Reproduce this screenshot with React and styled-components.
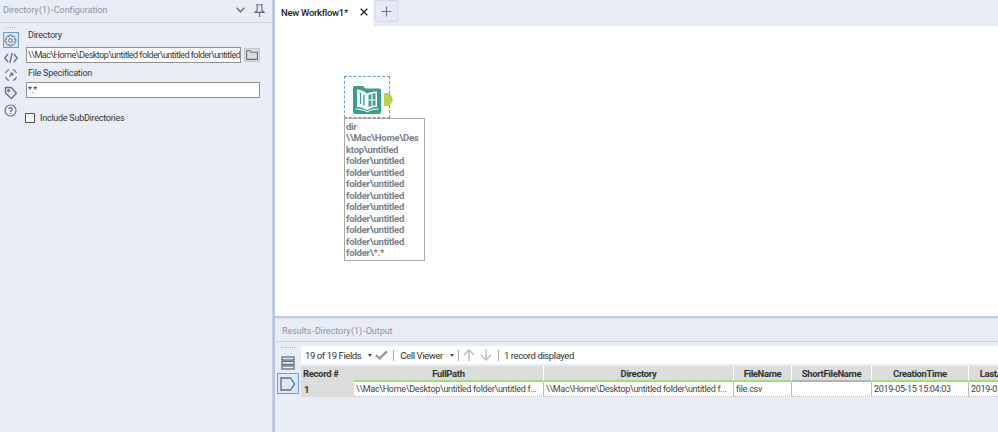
import React from "react";
import styled, { createGlobalStyle } from "styled-components";

const Global = createGlobalStyle`
  html, body { margin: 0; padding: 0; width: 998px; height: 432px; overflow: hidden; background: #e9edf8; }
  body { font-family: Roboto, "Noto Sans", sans-serif; font-size: 9px; color: #333; }
  * { box-sizing: border-box; }
`;

const Page = styled.div`
  display: flex;
  width: 998px;
  height: 432px;
  overflow: hidden;
`;

const ConfigPanel = styled.aside`
  width: 272px;
  flex: none;
  display: flex;
  flex-direction: column;
  background: #e9edf8;
`;

const PanelTitle = styled.div`
  display: flex;
  align-items: center;
  height: 23px;
  flex: none;
  padding: 0 7px 2px 3px;
  border-bottom: 1px solid #cfd1d8;
  color: #8d8f96;
  font-size: 9px;
  letter-spacing: -0.05px;
  word-spacing: -1.6px;
`;

const TitleText = styled.span`
  flex: 1;
`;

const TitleIcons = styled.div`
  display: flex;
  align-items: center;
  gap: 9px;
  color: #5f6a78;
`;

const ConfigBody = styled.div`
  flex: 1;
  min-height: 0;
  display: flex;
`;

const IconRail = styled.nav`
  width: 19px;
  margin-left: 1px;
  flex: none;
  display: flex;
  flex-direction: column;
  align-items: center;
`;

const GripDots = styled.div`
  height: 5px;
  width: ${p => p.$w}px;
  border-top: 1px dotted #a8abb2;
  margin-top: ${p => p.$mt}px;
  flex: none;
`;

const RailButton = styled.div`
  width: 16px;
  height: 16px;
  margin-bottom: 1.6px;
  display: flex;
  align-items: center;
  justify-content: center;
  color: #5f7080;
  border: 1px solid ${p => (p.$active ? "#6d9bd8" : "transparent")};
  background: ${p => (p.$active ? "#dbe6f7" : "transparent")};
`;

const Form = styled.div`
  flex: 1;
  min-width: 0;
  padding: 5px 12px 0 6px;
  display: flex;
  flex-direction: column;
`;

const FieldLabel = styled.label`
  display: block;
  margin-left: 2px;
  height: 14px;
  line-height: 14px;
  font-size: 9px;
  letter-spacing: -0.25px;
  color: #333;
`;

const PathRow = styled.div`
  display: flex;
  align-items: center;
  gap: 3px;
  margin: 5px 0 3px;
`;

const TextInput = styled.div`
  flex: ${p => (p.$fill ? "1" : "none")};
  min-width: 0;
  height: 16px;
  line-height: 14px;
  margin-top: ${p => p.$mt || 0}px;
  padding: 0 1px 0 1px;
  background: #fff;
  border: 1px solid #8f8f8f;
  font-size: 9px;
  letter-spacing: -0.5px;
  color: #333;
  white-space: nowrap;
  overflow: hidden;
`;

const BrowseButton = styled.div`
  width: 16px;
  height: 14px;
  flex: none;
  background: #dcdcdc;
  border: 1px solid #c4c4c4;
  display: flex;
  align-items: center;
  justify-content: center;
  color: #5f6a78;
`;

const CheckRow = styled.div`
  display: flex;
  align-items: center;
  gap: 5px;
  margin: 14px 0 0 -1px;
  font-size: 9px;
  letter-spacing: -0.25px;
  height: 12px;
`;

const Checkbox = styled.span`
  width: 10px;
  height: 10px;
  background: #fff;
  border: 1px solid #555;
  flex: none;
`;

const Splitter = styled.div`
  width: 3px;
  flex: none;
  background: #b7c4e0;
  border-left: 1px solid #c5cee4;
`;

const Main = styled.main`
  flex: 1;
  min-width: 0;
  display: flex;
  flex-direction: column;
`;

const TabBar = styled.div`
  display: flex;
  height: 26px;
  flex: none;
  background: #e9edf8;
  border-bottom: 1px solid #e0e4f0;
`;

const Tab = styled.div`
  width: 98px;
  height: 26px;
  background: #fff;
  display: flex;
  align-items: center;
  padding: 0 0 2px 6px;
  font-size: 9.5px;
  letter-spacing: -0.3px;
  font-weight: 500;
  color: #222;
`;

const TabName = styled.span`
  flex: 1;
`;

const TabClose = styled.span`
  display: flex;
  margin-right: 5px;
  color: #222;
`;

const AddTab = styled.div`
  width: 23px;
  height: 22px;
  margin-left: 2px;
  border: 1px solid #d3d9ea;
  border-radius: 2px;
  background: #e6eaf6;
  display: flex;
  align-items: center;
  justify-content: center;
  color: #68748a;
`;

const Canvas = styled.section`
  position: relative;
  flex: 1;
  background: #fff;
`;

const ToolSelection = styled.div`
  position: absolute;
  left: 69px;
  top: 50px;
  width: 46px;
  height: 42px;
  border: 1px dashed #6d9bd8;
`;

const ToolIcon = styled.svg`
  position: absolute;
  left: 78px;
  top: 60px;
`;

const ToolAnchor = styled.svg`
  position: absolute;
  left: 108.5px;
  top: 67px;
`;

const Annotation = styled.div`
  position: absolute;
  left: 69px;
  top: 92px;
  width: 81px;
  height: 143px;
  padding: 2px 0 0 1px;
  background: #fff;
  border: 1px solid #a9a9a9;
  color: #7b7f8a;
  font-size: 9.5px;
  letter-spacing: -0.25px;
  font-weight: 700;
  line-height: 11.45px;
  white-space: pre;
`;

const ResultsPanel = styled.section`
  height: 116px;
  flex: none;
  display: flex;
  flex-direction: column;
  background: #e9edf8;
  border-top: 2px solid #bcc7e0;
`;

const ResultsTitle = styled.div`
  height: 24px;
  flex: none;
  margin-left: 1px;
  padding: 1px 0 0 6px;
  display: flex;
  align-items: center;
  border-top: 1px solid #dcdfe8;
  border-bottom: 1px solid #cfd1d8;
  color: #8d8f96;
  font-size: 9px;
  letter-spacing: -0.05px;
  word-spacing: -1.6px;
`;

const ResultsBody = styled.div`
  flex: 1;
  min-height: 0;
  display: flex;
`;

const ResultsRail = styled.nav`
  width: 26px;
  flex: none;
  display: flex;
  flex-direction: column;
  align-items: center;
`;

const RailTall = styled.div`
  height: ${p => p.$h}px;
  width: 22px;
  flex: none;
  display: flex;
  align-items: center;
  justify-content: center;
  border: 1px solid ${p => (p.$active ? "#6d9bd8" : "transparent")};
  background: ${p => (p.$active ? "#dbe6f7" : "transparent")};
  color: #5f7080;
`;

const ResultsContent = styled.div`
  flex: 1;
  min-width: 0;
  overflow: hidden;
  padding-top: 4px;
`;

const ResultsToolbar = styled.div`
  height: 18px;
  display: flex;
  align-items: center;
  background: #fff;
  padding-left: 4px;
  font-size: 9.5px;
  letter-spacing: -0.4px;
  color: #333;
  white-space: nowrap;
`;

const ToolbarText = styled.span`
  margin-right: ${p => p.$mr || 0}px;
`;

const Caret = styled.span`
  width: 0;
  height: 0;
  border-left: 2.5px solid transparent;
  border-right: 2.5px solid transparent;
  border-top: 3px solid #444;
  margin-right: ${p => p.$mr || 0}px;
`;

const ToolbarSep = styled.span`
  width: 1px;
  height: 11px;
  background: #a8a8a8;
  margin: 0 ${p => p.$r}px 0 ${p => p.$l}px;
`;

const ToolbarIcon = styled.span`
  display: flex;
  color: ${p => p.$c || "#b9b9b9"};
  margin-right: ${p => p.$mr || 0}px;
`;

const Grid = styled.div`
  display: grid;
  grid-template-columns: 53px 190px 190px 58px 80px 97px 89px;
  width: 757px;
  margin-top: 2px;
  color: #333;
  white-space: nowrap;
`;

const RecordHead = styled.div`
  height: 16px;
  background: #dcdcdc;
  font-size: 9.5px;
  letter-spacing: -0.35px;
  font-weight: 700;
  padding-left: 2px;
  line-height: 15px;
`;

const ColHead = styled.div`
  height: 16px;
  background: #dcdcdc;
  border-right: 1px solid #fff;
  border-bottom: 2px solid ${p => p.$bar || "#9fe073"};
  font-size: 9.5px;
  letter-spacing: -0.35px;
  text-align: center;
  font-weight: 700;
  line-height: 15px;
  overflow: hidden;
`;

const RecordCell = styled.div`
  height: 15px;
  background: #dcdcdc;
  font-size: 9.5px;
  font-weight: 700;
  padding-left: 3px;
  line-height: 15px;
`;

const Cell = styled.div`
  height: 15px;
  background: #fff;
  border-right: 1px solid #bdbdbd;
  border-bottom: 1px dotted #bdbdbd;
  padding-left: 2px;
  font-size: 9px;
  letter-spacing: -0.3px;
  line-height: 15px;
  color: #444;
  overflow: hidden;
`;

const Gear = () => (
  <svg width="13" height="13" viewBox="0 0 24 24" fill="none" stroke="currentColor" strokeWidth="1.8">
    <circle cx="12" cy="12" r="3.5" />
    <path d="M10 2h4l.8 3 2.7-1.2 2.8 2.8L19 9.3l3 .7v4l-3 .7 1.3 2.7-2.8 2.8-2.7-1.3-.8 3h-4l-.8-3-2.7 1.3-2.8-2.8L5 14.700 2 14v-4l3-.7-1.3-2.7 2.8-2.8L9.200 5z" />
  </svg>
);

const Code = () => (
  <svg width="14" height="12" viewBox="0 0 14 12" fill="none" stroke="currentColor" strokeWidth="1.3">
    <path d="M4 2L.8 6 4 10M10 2l3.2 4L10 10M8.2 1L5.8 11" />
  </svg>
);

const Meta = () => (
  <svg width="14" height="14" viewBox="0 0 14 14" fill="none" stroke="currentColor" strokeWidth="1.2">
    <path d="M1.5 5A6 6 0 0 1 5 1.5M9 1.5A6 6 0 0 1 12.5 5M12.5 9A6 6 0 0 1 9 12.5M5 12.5A6 6 0 0 1 1.5 9" />
    <path d="M5.5 8.5L8.5 5.5M6 5.3h2.700V8" />
  </svg>
);

const Tag = () => (
  <svg width="14" height="14" viewBox="0 0 14 14" fill="none" stroke="currentColor" strokeWidth="1.3">
    <path d="M1.5 1.5H7l5.5 5.800-5.200 5.200L1.5 7z" />
    <circle cx="4.6" cy="4.6" r=".9" />
  </svg>
);

const Help = () => (
  <svg width="13" height="13" viewBox="0 0 13 13" fill="none" stroke="currentColor" strokeWidth="1.2">
    <circle cx="6.5" cy="6.5" r="5.5" />
    <path d="M4.800 5.200c0-2.200 3.500-2.200 3.500 0 0 1.400-1.800 1.300-1.800 2.700M6.500 9v1" />
  </svg>
);

const Folder = () => (
  <svg width="12" height="10" viewBox="0 0 12 10" fill="none" stroke="currentColor" strokeWidth="1.1">
    <path d="M.6 9.400V.8h3.600l1 1.400h6.200v7.200z" />
  </svg>
);

const Chevron = () => (
  <svg width="9" height="6" viewBox="0 0 9 6" fill="none" stroke="currentColor" strokeWidth="1.3">
    <path d="M.7.8l3.800 3.900L8.300.8" />
  </svg>
);

const Pin = () => (
  <svg width="11" height="13" viewBox="0 0 11 13" fill="none" stroke="currentColor" strokeWidth="1.1">
    <path d="M2 .8h7M3.200.8v5.400L1 8.400h9L7.800 6.200V.8M5.500 8.400V13" />
  </svg>
);

const Close = () => (
  <svg width="8" height="8" viewBox="0 0 8 8" fill="none" stroke="currentColor" strokeWidth="1.3">
    <path d="M.7.7l6.600 6.600M7.300.7L.7 7.300" />
  </svg>
);

const Plus = () => (
  <svg width="11" height="11" viewBox="0 0 11 11" fill="none" stroke="currentColor" strokeWidth="1.1">
    <path d="M5.500.5v10M.5 5.500h10" />
  </svg>
);

const ListStack = () => (
  <svg width="14" height="14" viewBox="0 0 14 14" fill="none" stroke="currentColor" strokeWidth="1.3">
    <rect x="1" y="1" width="12" height="3" />
    <rect x="1" y="5.5" width="12" height="3" />
    <rect x="1" y="10" width="12" height="3" />
  </svg>
);

const OutputTag = () => (
  <svg width="16" height="14" viewBox="0 0 16 14" fill="none" stroke="#5f7080" strokeWidth="1.3">
    <path d="M1 1h9.500l4 6-4 6H1z" />
  </svg>
);

const Check = () => (
  <svg width="13" height="10" viewBox="0 0 13 10" fill="none" stroke="currentColor" strokeWidth="2.4">
    <path d="M1 5.200l3.800 3.200L12 1.400" />
  </svg>
);

const ArrowUp = () => (
  <svg width="12" height="12" viewBox="0 0 12 12" fill="none" stroke="currentColor" strokeWidth="1.3">
    <path d="M6 12V1M1 6l5-5 5 5" />
  </svg>
);

const ArrowDown = () => (
  <svg width="12" height="12" viewBox="0 0 12 12" fill="none" stroke="currentColor" strokeWidth="1.3">
    <path d="M6 0v11M1 6l5 5 5-5" />
  </svg>
);

const annotation = `dir
\\\\Mac\\Home\\Des
ktop\\untitled
folder\\untitled
folder\\untitled
folder\\untitled
folder\\untitled
folder\\untitled
folder\\untitled
folder\\untitled
folder\\untitled
folder\\*.*`;

const longPath = "\\\\Mac\\Home\\Desktop\\untitled folder\\untitled f...";

export default function App() {
  return (
    <Page>
      <Global />
      <ConfigPanel>
        <PanelTitle>
          <TitleText>Directory (1) - Configuration</TitleText>
          <TitleIcons><Chevron /><Pin /></TitleIcons>
        </PanelTitle>
        <ConfigBody>
          <IconRail>
            <GripDots $w={9} $mt={4} />
            <RailButton $active><Gear /></RailButton>
            <RailButton><Code /></RailButton>
            <RailButton><Meta /></RailButton>
            <RailButton><Tag /></RailButton>
            <RailButton><Help /></RailButton>
          </IconRail>
          <Form>
            <FieldLabel>Directory</FieldLabel>
            <PathRow>
              <TextInput $fill>\\Mac\Home\Desktop\untitled folder\untitled folder\untitled</TextInput>
              <BrowseButton><Folder /></BrowseButton>
            </PathRow>
            <FieldLabel>File Specification</FieldLabel>
            <TextInput $mt={2}>*.*</TextInput>
            <CheckRow><Checkbox />Include SubDirectories</CheckRow>
          </Form>
        </ConfigBody>
      </ConfigPanel>
      <Splitter />
      <Main>
        <TabBar>
          <Tab>
            <TabName>New Workflow1*</TabName>
            <TabClose><Close /></TabClose>
          </Tab>
          <AddTab><Plus /></AddTab>
        </TabBar>
        <Canvas>
          <ToolSelection />
          <ToolIcon width="28" height="28" viewBox="0 0 28 28">
            <path d="M2 0h8l2.500 2.500H26a2 2 0 0 1 2 2V26a2 2 0 0 1-2 2H2a2 2 0 0 1-2-2V2a2 2 0 0 1 2-2z" fill="#35a08d" />
            <path d="M14 7.500C11 5 7.500 3.500 4 3.500V21c3.500 0 7 1 10 3 3-2 6.500-3 10-3V5.500c-3.500 0-7 .5-10 2z" fill="#fff" />
            <path d="M7.500 7v11M11 8.500v11" stroke="#35a08d" strokeWidth="1.3" fill="none" />
            <path d="M15.500 9c2-.8 4.500-1.600 7-1.800v12.100c-2.500.2-5 1-7 1.800z" fill="#35a08d" />
            <path d="M19 8v12.500M15.500 14h7" stroke="#fff" strokeWidth="1.2" fill="none" />
            <path d="M2.500 23c4.500 0 8.500 1 11.500 2.800 3-1.800 7-2.800 11.500-2.800" stroke="#fff" strokeWidth="1.2" fill="none" />
          </ToolIcon>
          <ToolAnchor width="9" height="13" viewBox="0 0 9 13">
            <path d="M0 0h6l3 6.500-3 6.500H0z" fill="#b9d54f" />
          </ToolAnchor>
          <Annotation>{annotation}</Annotation>
        </Canvas>
        <ResultsPanel>
          <ResultsTitle>Results - Directory (1) - Output</ResultsTitle>
          <ResultsBody>
            <ResultsRail>
              <GripDots $w={14} $mt={5} />
              <RailTall $h={21}><ListStack /></RailTall>
              <RailTall $h={21} $active><OutputTag /></RailTall>
            </ResultsRail>
            <ResultsContent>
              <ResultsToolbar>
                <ToolbarText $mr={7}>19 of 19 Fields</ToolbarText>
                <Caret $mr={3} />
                <ToolbarIcon $c="#9a9a9a"><Check /></ToolbarIcon>
                <ToolbarSep $l={5} $r={6} />
                <ToolbarText $mr={7}>Cell Viewer</ToolbarText>
                <Caret />
                <ToolbarSep $l={4} $r={4} />
                <ToolbarIcon $mr={5}><ArrowUp /></ToolbarIcon>
                <ToolbarIcon><ArrowDown /></ToolbarIcon>
                <ToolbarSep $l={6} $r={5} />
                <ToolbarText>1 record displayed</ToolbarText>
              </ResultsToolbar>
              <Grid>
                <RecordHead>Record #</RecordHead>
                <ColHead>FullPath</ColHead>
                <ColHead>Directory</ColHead>
                <ColHead>FileName</ColHead>
                <ColHead $bar="#b5b5b5">ShortFileName</ColHead>
                <ColHead>CreationTime</ColHead>
                <ColHead>LastAccessTime</ColHead>
                <RecordCell>1</RecordCell>
                <Cell>{longPath}</Cell>
                <Cell>{longPath}</Cell>
                <Cell>file.csv</Cell>
                <Cell />
                <Cell>2019-05-15 15:04:03</Cell>
                <Cell>2019-05-15 15:04:03</Cell>
              </Grid>
            </ResultsContent>
          </ResultsBody>
        </ResultsPanel>
      </Main>
    </Page>
  );
}
